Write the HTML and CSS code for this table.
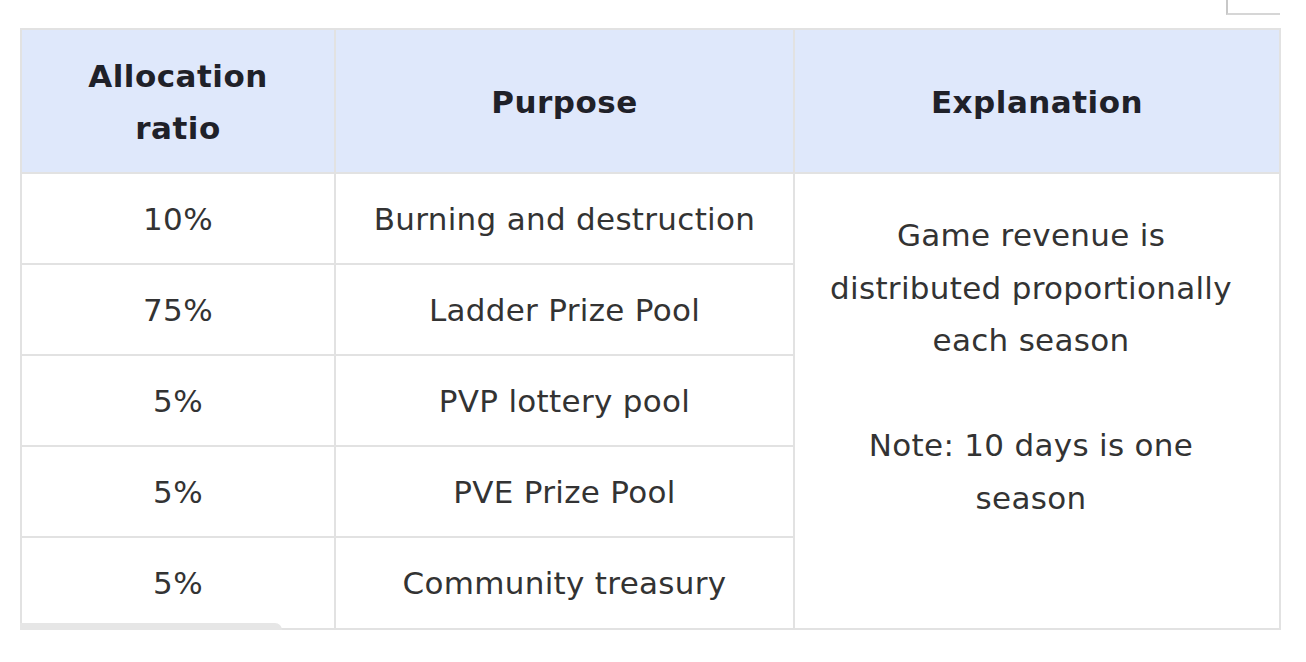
FILE: index.html
```html
<!DOCTYPE html>
<html>
<head>
<meta charset="utf-8">
<link rel="stylesheet" href="styles.css">
</head>
<body>
<div class="page">
  <div class="corner-box"></div>
  <div class="table-wrap">
    <table class="alloc">
      <colgroup>
        <col class="c1"><col class="c2"><col class="c3">
      </colgroup>
      <thead>
        <tr>
          <th>Allocation<br>ratio</th>
          <th>Purpose</th>
          <th>Explanation</th>
        </tr>
      </thead>
      <tbody>
        <tr>
          <td>10%</td>
          <td>Burning and destruction</td>
          <td class="explain" rowspan="5">Game revenue is<br>distributed proportionally<br>each season<br><br>Note: 10 days is one<br>season</td>
        </tr>
        <tr><td>75%</td><td>Ladder Prize Pool</td></tr>
        <tr><td>5%</td><td>PVP lottery pool</td></tr>
        <tr><td>5%</td><td>PVE Prize Pool</td></tr>
        <tr class="last"><td>5%</td><td>Community treasury</td></tr>
      </tbody>
    </table>
    <div class="scrollbar"></div>
  </div>
</div>
</body>
</html>
```
FILE: styles.css
```css
html, body {
  margin: 0;
  padding: 0;
  background: #ffffff;
}
body {
  font-family: "DejaVu Sans", Verdana, sans-serif;
  color: #2b2b2b;
}
.page {
  position: relative;
  width: 1306px;
  height: 662px;
  padding: 28px 0 0 20px;
  box-sizing: border-box;
}
.corner-box {
  position: absolute;
  top: -1px;
  left: 1226px;
  width: 52px;
  height: 14px;
  border-left: 2px solid #c8c8c8;
  border-bottom: 2px solid #d6d6d6;
}
.table-wrap {
  position: relative;
  width: 1259px;
}
.alloc {
  border-collapse: collapse;
  width: 1259px;
  table-layout: fixed;
  font-size: 31px;
  letter-spacing: 0.3px;
  line-height: 52px;
  text-align: center;
}
.c1 { width: 314px; }
.c2 { width: 459px; }
.c3 { width: 486px; }
.alloc th, .alloc td {
  border: 2px solid #e2e2e2;
  padding: 19px 4px 18px;
}
.alloc th {
  background: #dfe8fb;
  font-weight: bold;
  color: #1f2129;
  padding: 20px 4px 18px;
  letter-spacing: 0.5px;
}
.alloc td {
  color: #333333;
}
.alloc tr.last td {
  padding-bottom: 19px;
}
.alloc td.explain {
  vertical-align: top;
  padding: 35px 16px 0 4px;
  line-height: 52.5px;
}
.scrollbar {
  position: absolute;
  left: 0;
  bottom: 0;
  width: 262px;
  height: 7px;
  background: #e6e6e6;
  border-radius: 0 10px 0 0;
}
```
